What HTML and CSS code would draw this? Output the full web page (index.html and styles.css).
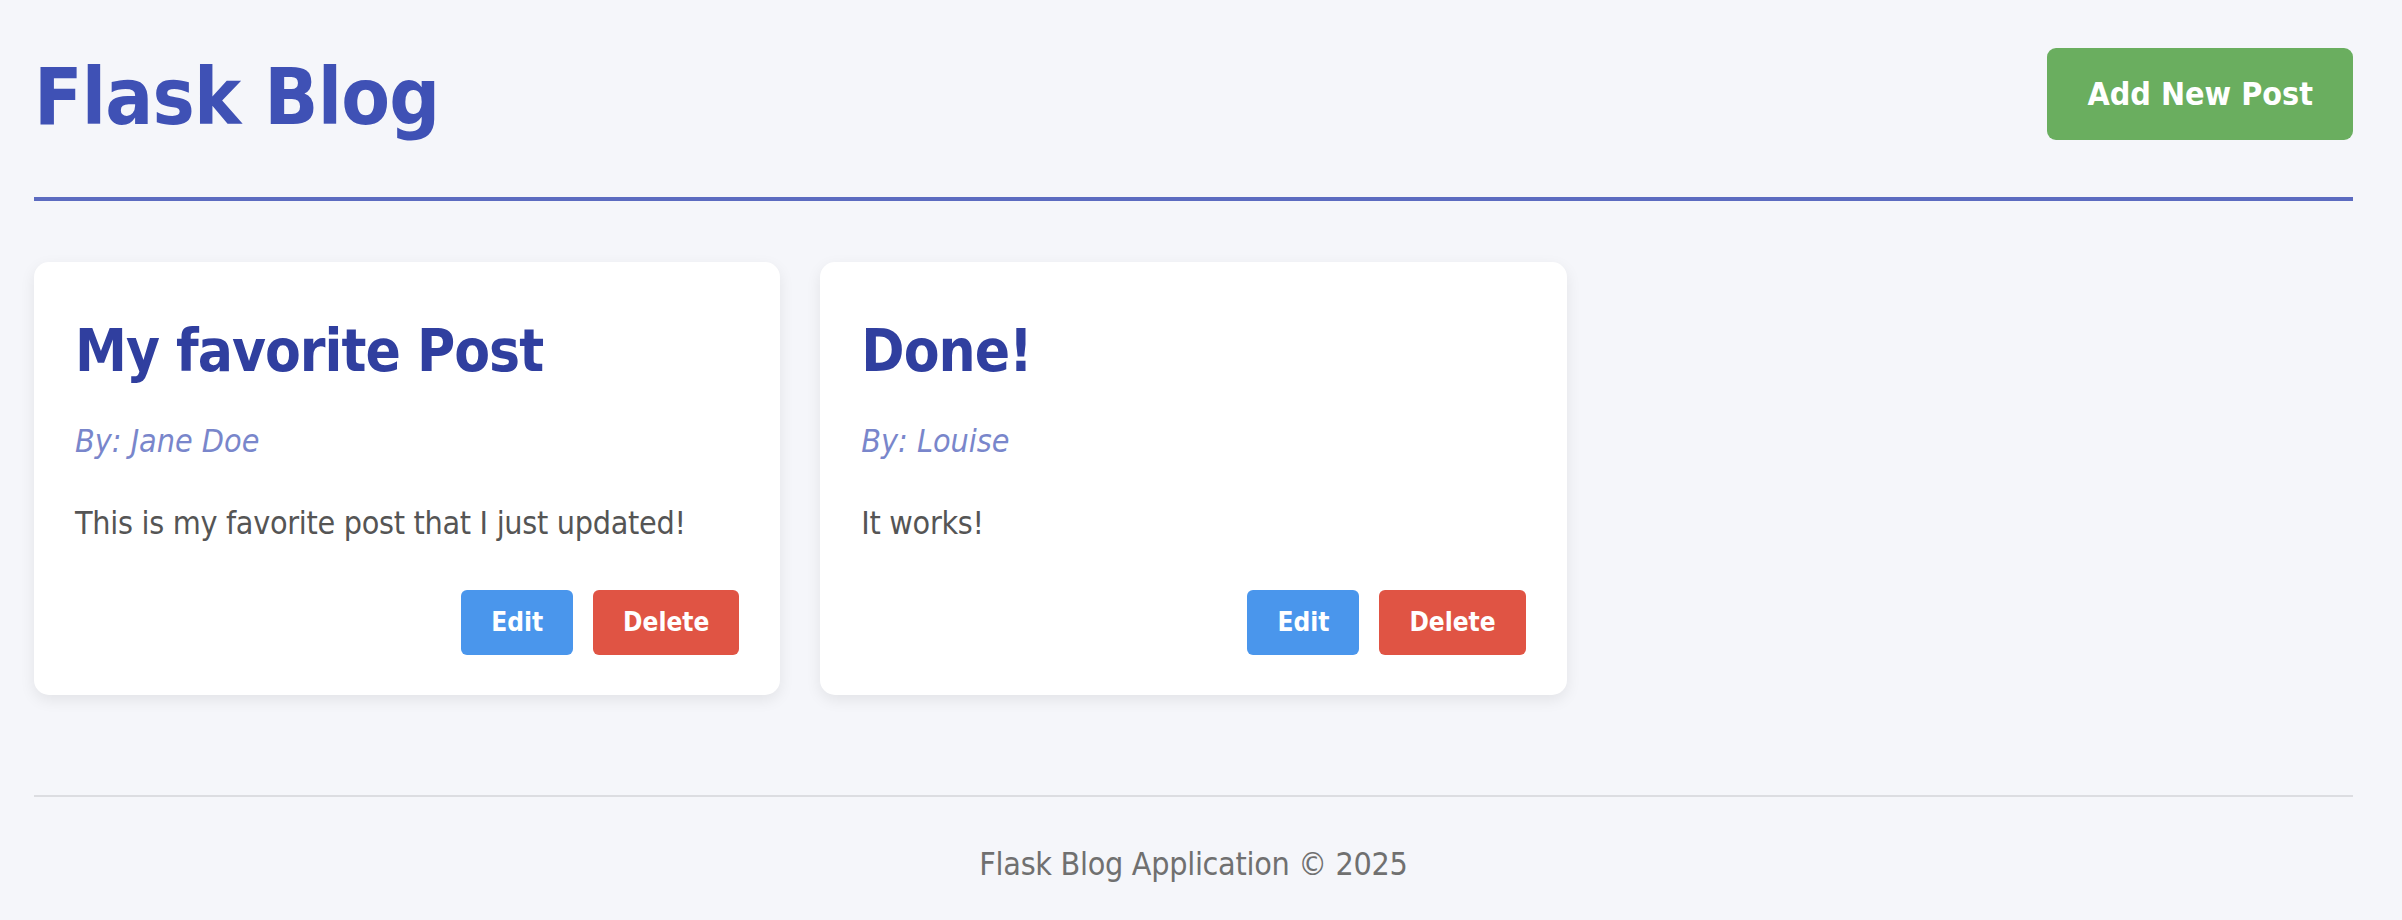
FILE: index.html
```html
<!DOCTYPE html>
<html lang="en">
<head>
<meta charset="utf-8">
<title>Flask Blog</title>
<link rel="stylesheet" href="styles.css">
</head>
<body>
  <header class="site-header">
    <h1 class="site-title">Flask Blog</h1>
    <a class="btn btn-add" href="#">Add New Post</a>
  </header>

  <main class="posts">
    <article class="post-card">
      <h2 class="post-title">My favorite Post</h2>
      <p class="post-author">By: Jane Doe</p>
      <p class="post-content">This is my favorite post that I just updated!</p>
      <div class="post-actions">
        <a class="btn btn-small btn-edit" href="#">Edit</a>
        <a class="btn btn-small btn-delete" href="#">Delete</a>
      </div>
    </article>
    <article class="post-card">
      <h2 class="post-title">Done!</h2>
      <p class="post-author">By: Louise</p>
      <p class="post-content">It works!</p>
      <div class="post-actions">
        <a class="btn btn-small btn-edit" href="#">Edit</a>
        <a class="btn btn-small btn-delete" href="#">Delete</a>
      </div>
    </article>
  </main>

  <footer class="site-footer">
    <p class="footer-text">Flask Blog Application © 2025</p>
  </footer>
</body>
</html>
```

FILE: styles.css
```css
html, body {
  margin: 0;
  padding: 0;
}

body {
  background: #f5f6fa;
  font-family: "DejaVu Sans Condensed", "DejaVu Sans", sans-serif;
  font-stretch: semi-condensed;
  font-size: 32px;
  line-height: 38px;
  color: #555555;
  padding: 48px 49px 0 34px;
}

.site-header {
  display: flex;
  justify-content: space-between;
  align-items: center;
  padding-bottom: 57px;
  border-bottom: 4px solid #5c6bc0;
}

.site-title {
  margin: 0;
  padding-top: 6px;
  font-size: 79px;
  line-height: 86px;
  letter-spacing: -0.8px;
  font-weight: bold;
  color: #3f51b5;
}

.btn {
  display: inline-block;
  text-decoration: none;
  color: #ffffff;
  font-weight: bold;
}

.btn-add {
  background: #6aae5f;
  font-size: 32px;
  line-height: 38px;
  padding: 27px 40px;
  border-radius: 9px;
}

.posts {
  display: grid;
  grid-template-columns: repeat(3, 1fr);
  gap: 40px;
  margin-top: 61px;
}

.post-card {
  background: #ffffff;
  border-radius: 15px;
  padding: 53px 41px 40px;
  box-shadow: 0 5px 15px rgba(0, 0, 0, 0.08);
}

.post-title {
  margin: 0 0 35px;
  font-size: 58px;
  line-height: 72px;
  letter-spacing: -1px;
  font-weight: bold;
  color: #303f9f;
}

.post-author {
  margin: 0 0 44px;
  font-style: italic;
  color: #7986cb;
}

.post-content {
  margin: 0 0 48px;
  letter-spacing: -0.3px;
  color: #555555;
}

.post-actions {
  display: flex;
  justify-content: flex-end;
  gap: 20px;
}

.btn-small {
  font-size: 26px;
  line-height: 31px;
  padding: 17px 30px;
  border-radius: 6px;
}

.btn-edit {
  background: #4a96ec;
}

.btn-delete {
  background: #e05444;
}

.site-footer {
  margin-top: 100px;
  border-top: 2px solid #dcdde1;
  padding: 48px 0 37px;
  text-align: center;
}

.footer-text {
  margin: 0;
  letter-spacing: -0.3px;
  color: #707070;
}
```
